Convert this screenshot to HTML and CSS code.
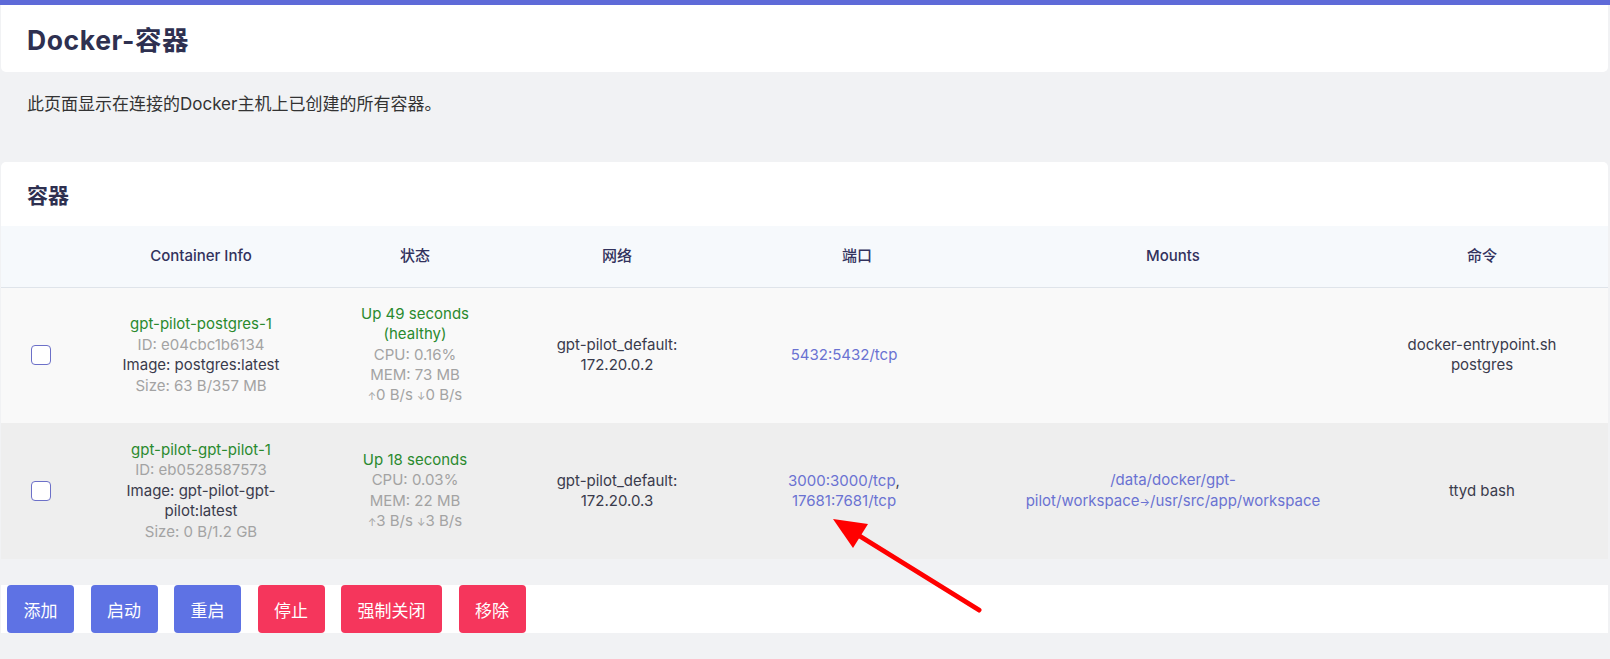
FILE: index.html
```html
<html>
    <head>
        <title>Docker-容器</title>
        <link rel="stylesheet" href="styles.css">
    </head>

    <body>
        <div class="Barra"></div>

        <div class="Pagina">
            <!-- Titulo -->
            <div class="Titulo">
                <h1>Docker-容器</h1>
            </div>

            <p class="Descripcion">此页面显示在连接的Docker主机上已创建的所有容器。</p>

            <!-- Tabla de contenedores -->
            <div class="Tarjeta">
                <h2>容器</h2>
                <table class="Tabla">
                    <colgroup>
                        <col style="width: 81px">
                        <col style="width: 238px">
                        <col style="width: 190px">
                        <col style="width: 214px">
                        <col style="width: 266px">
                        <col style="width: 366px">
                        <col style="width: 252px">
                    </colgroup>
                    <thead>
                        <tr>
                            <th></th>
                            <th>Container Info</th>
                            <th>状态</th>
                            <th>网络</th>
                            <th>端口</th>
                            <th>Mounts</th>
                            <th>命令</th>
                        </tr>
                    </thead>
                    <tbody>
                        <tr class="Fila">
                            <td><input type="checkbox" class="Marca"></td>
                            <td>
                                <div class="Verde">gpt-pilot-postgres-1</div>
                                <div class="Gris">ID: e04cbc1b6134</div>
                                <div>Image: postgres:latest</div>
                                <div class="Gris">Size: 63 B/357 MB</div>
                            </td>
                            <td>
                                <div class="Verde">Up 49 seconds (healthy)</div>
                                <div class="Gris">CPU: 0.16%</div>
                                <div class="Gris">MEM: 73 MB</div>
                                <div class="Gris"><span class="Flecha">↑</span>0 B/s <span class="Flecha">↓</span>0 B/s</div>
                            </td>
                            <td>gpt-pilot_default: 172.20.0.2</td>
                            <td class="Puertos"><a href="#" class="Enlace">5432:5432/tcp</a></td>
                            <td></td>
                            <td>docker-entrypoint.sh<br>postgres</td>
                        </tr>
                        <tr class="Fila Activa">
                            <td><input type="checkbox" class="Marca"></td>
                            <td>
                                <div class="Verde">gpt-pilot-gpt-pilot-1</div>
                                <div class="Gris">ID: eb0528587573</div>
                                <div>Image: gpt-pilot-gpt-pilot:latest</div>
                                <div class="Gris">Size: 0 B/1.2 GB</div>
                            </td>
                            <td>
                                <div class="Verde">Up 18 seconds</div>
                                <div class="Gris">CPU: 0.03%</div>
                                <div class="Gris">MEM: 22 MB</div>
                                <div class="Gris"><span class="Flecha">↑</span>3 B/s <span class="Flecha">↓</span>3 B/s</div>
                            </td>
                            <td>gpt-pilot_default: 172.20.0.3</td>
                            <td class="Puertos"><a href="#" class="Enlace">3000:3000/tcp</a>,<br><a href="#" class="Enlace">17681:7681/tcp</a></td>
                            <td><a href="#" class="Enlace">/data/docker/gpt-pilot/workspace<span class="FlechaMontaje">→</span>/usr/src/app/workspace</a></td>
                            <td>ttyd bash</td>
                        </tr>
                    </tbody>
                </table>
            </div>

            <!-- Botones -->
            <div class="Acciones">
                <button class="Boton Azul">添加</button>
                <button class="Boton Azul">启动</button>
                <button class="Boton Azul">重启</button>
                <button class="Boton Rojo">停止</button>
                <button class="Boton Rojo">强制关闭</button>
                <button class="Boton Rojo">移除</button>
            </div>
        </div>

        <!-- Flecha roja sobre la captura -->
        <svg class="Senal" width="1610" height="659" viewBox="0 0 1610 659">
            <line x1="979" y1="610" x2="858" y2="535" stroke="#ff0000" stroke-width="5" stroke-linecap="round"/>
            <polygon points="833,519 868,524 853,548" fill="#ff0000"/>
        </svg>
    </body>
</html>
```

FILE: styles.css
```css
body{
    margin: 0;
    background-color: #f1f2f4;
    font-family: "Inter", "Noto Sans CJK SC", sans-serif;
    color: #32325d;
}

.Barra{
    height: 5px;
    background-color: #5e6ad8;
}

.Pagina{
    padding: 0 2px 0 1px;
}

.Titulo{
    background-color: white;
    height: 67px;
    display: flex;
    align-items: center;
    padding-left: 26px;
    border-radius: 0 0 5px 5px;
}

h1{
    margin: 0;
    font-size: 26.5px;
    font-weight: 700;
    color: #2e3050;
    letter-spacing: 0.6px;
}

.Descripcion{
    margin: 20px 0 46px 26px;
    font-size: 17px;
    line-height: 24px;
    color: #333;
}

.Tarjeta{
    background-color: white;
    border-radius: 5px 5px 0 0;
}

h2{
    margin: 0;
    height: 64px;
    display: flex;
    align-items: center;
    padding-left: 26px;
    font-size: 21px;
    font-weight: 700;
    color: #2e3050;
}

.Tabla{
    width: 100%;
    table-layout: fixed;
    border-collapse: collapse;
    font-size: 15px;
    line-height: 20.4px;
    text-align: center;
}

.Tabla th{
    height: 61px;
    background-color: #f6f9fc;
    border-bottom: 1px solid #dfe4ea;
    font-weight: 500;
    color: #32325d;
    font-size: 15px;
}

.Tabla td{
    height: 136px;
    padding: 0 16px;
    box-sizing: border-box;
    color: #3a3b4c;
    vertical-align: middle;
}

.Tabla td.Puertos{
    padding-right: 42px;
}

.Fila{
    background-color: #f9f9f9;
}

.Activa{
    background-color: #eeeeee;
}

.Verde{
    color: #2a8a2e;
}

.Gris{
    color: #a3a3a3;
}

.Flecha{
    font-size: 10px;
}

.FlechaMontaje{
    font-size: 11px;
}

.Enlace{
    color: #6a72d2;
    text-decoration: none;
}

.Marca{
    appearance: none;
    width: 20px;
    height: 20px;
    margin: 0 0 0 14px;
    border: 1px solid #6c70c8;
    border-radius: 4px;
    background-color: white;
    display: block;
}

.Acciones{
    margin-top: 26px;
    height: 48px;
    background-color: white;
    display: flex;
    gap: 16.5px;
    padding-left: 6px;
}

.Boton{
    height: 48px;
    padding: 0 16.5px;
    border: none;
    border-radius: 4px;
    color: white;
    font-family: "Noto Sans CJK SC", sans-serif;
    font-size: 17px;
}

.Azul{
    background-color: #5e72e4;
}

.Rojo{
    background-color: #f5365c;
}

.Senal{
    position: absolute;
    left: 0;
    top: 0;
    pointer-events: none;
}
```
